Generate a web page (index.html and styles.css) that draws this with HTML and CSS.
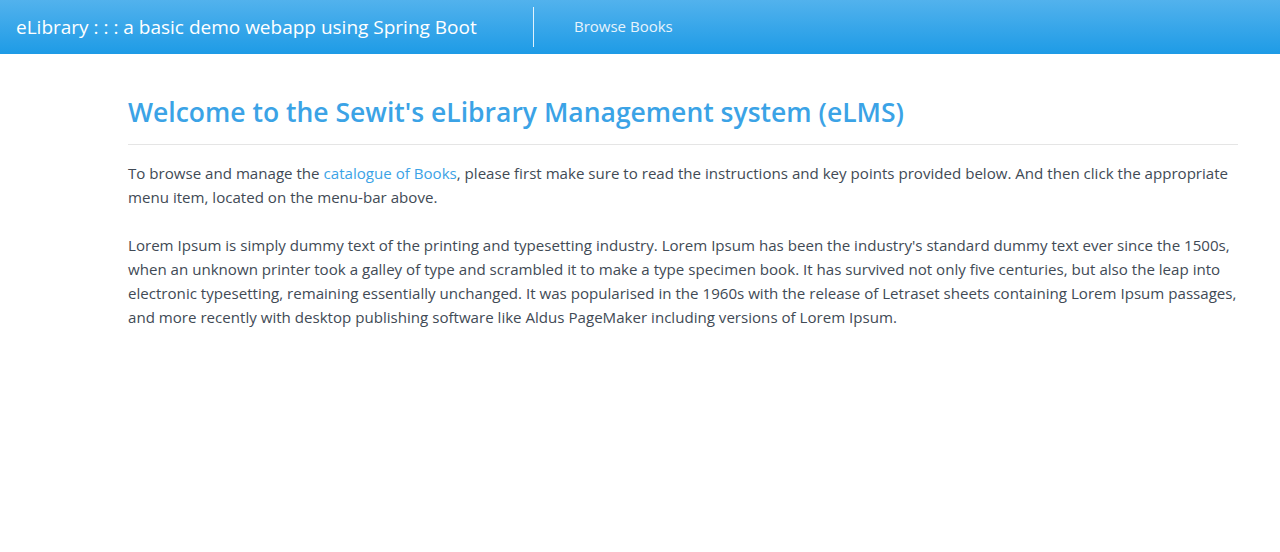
FILE: index.html
```html
<!DOCTYPE html>
<html>
<head>
<meta charset="utf-8">
<link rel="stylesheet" href="styles.css">
</head>
<body>
<header class="navbar">
  <a class="brand" href="#">eLibrary : : : a basic demo webapp using Spring Boot</a>
  <span class="divider"></span>
  <a class="nav-link" href="#">Browse Books</a>
</header>
<main class="content">
  <h1 class="title">Welcome to the Sewit's eLibrary Management system (eLMS)</h1>
  <hr class="rule">
  <p class="text">To browse and manage the <a class="link" href="#">catalogue of Books</a>, please first make sure to read the instructions and key points provided below. And then click the appropriate menu item, located on the menu-bar above.</p>
  <p class="text">Lorem Ipsum is simply dummy text of the printing and typesetting industry. Lorem Ipsum has been the industry's standard dummy text ever since the 1500s, when an unknown printer took a galley of type and scrambled it to make a type specimen book. It has survived not only five centuries, but also the leap into electronic typesetting, remaining essentially unchanged. It was popularised in the 1960s with the release of Letraset sheets containing Lorem Ipsum passages, and more recently with desktop publishing software like Aldus PageMaker including versions of Lorem Ipsum.</p>
</main>
</body>
</html>
```
FILE: styles.css
```css
html, body {
  margin: 0;
  padding: 0;
  background: #fff;
}
body {
  font-family: "Open Sans", "Noto Sans", sans-serif;
  color: #414a55;
}
.navbar {
  height: 54px;
  display: flex;
  align-items: center;
  background: linear-gradient(to bottom, #52b2ed 0%, #1e9be6 100%);
  box-sizing: border-box;
}
.brand {
  color: #fff;
  text-decoration: none;
  font-size: 19px;
  padding-left: 16px;
  width: 533px;
  box-sizing: border-box;
  white-space: nowrap;
}
.divider {
  width: 1px;
  height: 40px;
  background: rgba(255,255,255,0.85);
  align-self: center;
}
.nav-link {
  color: #e6f3fc;
  text-decoration: none;
  font-size: 15px;
  margin-left: 40px;
  margin-bottom: 2px;
}
.content {
  padding: 0 42px 0 128px;
}
.title {
  margin: 0;
  padding-top: 40px;
  font-size: 26.5px;
  font-weight: 600;
  color: #3ba3e6;
  line-height: 36px;
}
.rule {
  margin: 14px 0 16px 0;
  border: 0;
  border-top: 1px solid #e5e5e5;
}
.text {
  margin: 0 0 24px 0;
  font-size: 15.1px;
  line-height: 24px;
}
.link {
  color: #3ba3e6;
  text-decoration: none;
}
```
